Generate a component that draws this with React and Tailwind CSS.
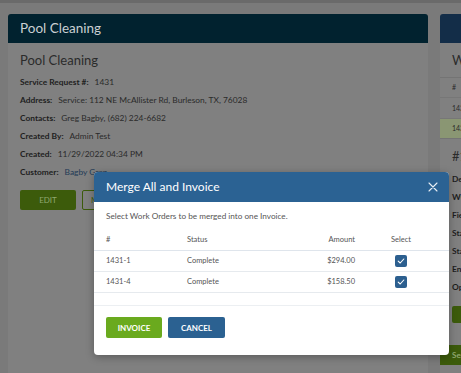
import React from "react";

// Background detail line: bold label + value
const InfoLine = ({ label, children }) => (
  <div className="flex gap-[6px] leading-[18px] text-[8.4px]">
    <span className="font-bold text-[#1e1e1e]">{label}</span>
    <span className="text-[#2a2a2a]">{children}</span>
  </div>
);

const Check = () => (
  <span className="inline-flex h-[12px] w-[12px] items-center justify-center rounded-[2px] bg-[#2c5f8f]">
    <svg width="8" height="8" viewBox="0 0 10 10" fill="none">
      <path d="M1.5 5.2 L4 7.5 L8.5 2.5" stroke="#fff" strokeWidth="1.4" strokeLinecap="round" strokeLinejoin="round" />
    </svg>
  </span>
);

const OrderRow = ({ id, status, amount }) => (
  <div className="flex h-[21px] items-center border-b border-[#e6eaee] pl-[12px] text-[7.5px] text-[#555]">
    <span className="w-[81px]">{id}</span>
    <span className="w-[113px]">{status}</span>
    <span className="w-[55px] text-right">{amount}</span>
    <span className="flex w-[92px] justify-center">
      <Check />
    </span>
  </div>
);

export default function App() {
  return (
    <div
      className="relative h-[373px] w-[461px] overflow-hidden border-t-[3px] border-[#6a6a6a] bg-[#7a7a7a]"
      style={{ fontFamily: "Lato, 'Open Sans', sans-serif" }}
    >
      {/* -------------------- page behind the overlay -------------------- */}
      <div className="flex gap-[12px] pl-[8px] pt-[11px]">
        {/* Left card */}
        <div className="flex h-[400px] w-[420px] shrink-0 flex-col">
          <div className="flex h-[29px] items-center rounded-t-[3px] bg-[#01222f] px-[12px] text-[13.5px] text-[#c9cfd2]">
            Pool Cleaning
          </div>
          <div className="flex-1 bg-[#808080] px-[12px] pt-[8px]">
            <div className="mb-[4px] text-[13px] leading-[18px] text-[#2b2b2b]">Pool Cleaning</div>
            <InfoLine label="Service Request #:">1431</InfoLine>
            <InfoLine label="Address:">Service: 112 NE McAllister Rd, Burleson, TX, 76028</InfoLine>
            <InfoLine label="Contacts:">Greg Bagby, (682) 224-6682</InfoLine>
            <InfoLine label="Created By:">Admin Test</InfoLine>
            <InfoLine label="Created:">11/29/2022 04:34 PM</InfoLine>
            <InfoLine label="Customer:">
              <span className="text-[#1f3a56]">Bagby Greg</span>
            </InfoLine>
            <div className="mt-[9px] flex gap-[6px]">
              <div className="flex h-[20px] w-[56px] items-center justify-center rounded-[2px] bg-[#3c5b0b] text-[8px] text-[#8fa870]">
                EDIT
              </div>
              <div className="flex h-[20px] items-center rounded-[2px] border border-[#3c5b0b] px-[8px] text-[8px] text-[#3c5b0b]">
                MERGE ALL AND INVOICE
              </div>
            </div>
          </div>
        </div>

        {/* Right card (cut off) */}
        <div className="flex h-[400px] w-[120px] shrink-0 flex-col">
          <div className="h-[29px] rounded-t-[3px] bg-[#132d48]" />
          <div className="flex-1 bg-[#808080]">
            <div className="px-[12px] pt-[8px] text-[13px] leading-[18px] text-[#2b2b2b]">Work Orders</div>
            <div className="mt-[8px] border-y border-[#747474]">
              <div className="flex h-[19px] items-center px-[12px] text-[7px] text-[#2a2a2a]">#</div>
              <div className="flex h-[21px] items-center border-t border-[#777] px-[12px] text-[7px] text-[#2a2a2a]">1431-1</div>
              <div className="flex h-[20px] items-center border-t border-[#777] bg-[#8a9673] px-[12px] text-[7px] text-[#2a2a2a]">1431-4</div>
            </div>
            <div className="px-[12px] pt-[8px] text-[13px] leading-[18px] text-[#2b2b2b]">#1431-4</div>
            <div className="px-[12px] pt-[5px]">
              <InfoLine label="Description:">Pool</InfoLine>
              <InfoLine label="WO Type:">Service</InfoLine>
              <InfoLine label="Field Tech:">Admin</InfoLine>
              <InfoLine label="Start:">11/29</InfoLine>
              <InfoLine label="Status:">Complete</InfoLine>
              <InfoLine label="End:">11/29</InfoLine>
              <InfoLine label="Options:">-</InfoLine>
              <div className="mt-[10px] h-[17px] w-[80px] rounded-[2px] bg-[#3c5b0b]" />
            </div>
            <div className="mt-[22px] flex h-[20px] items-center bg-[#3c5b0b] px-[12px] text-[8px] font-bold text-[#8fa870]">
              Send
            </div>
          </div>
        </div>
      </div>

      {/* -------------------- modal -------------------- */}
      <div className="absolute left-[94px] top-[169px] w-[355px] overflow-hidden rounded-[4px] bg-white shadow-[0_2px_8px_rgba(0,0,0,0.3)]">
        <div className="flex h-[30px] items-center justify-between bg-[#2b6293] pl-[12px] pr-[11px]">
          <span className="text-[12px] text-white">Merge All and Invoice</span>
          <svg width="10" height="10" viewBox="0 0 10 10">
            <path d="M1 1 L9 9 M9 1 L1 9" stroke="#e8eef4" strokeWidth="1.1" strokeLinecap="round" />
          </svg>
        </div>
        <div className="px-[12px] pt-[6px] text-[8.2px] leading-[16px] text-[#555]">
          Select Work Orders to be merged into one Invoice.
        </div>
        <div className="mt-[6px]">
          <div className="flex h-[21px] items-center border-b border-[#dfe5ec] pl-[12px] text-[7.5px] text-[#555]">
            <span className="w-[81px]">#</span>
            <span className="w-[113px]">Status</span>
            <span className="w-[55px] text-right">Amount</span>
            <span className="w-[92px] text-center">Select</span>
          </div>
          <OrderRow id="1431-1" status="Complete" amount="$294.00" />
          <OrderRow id="1431-4" status="Complete" amount="$158.50" />
        </div>
        <div className="mt-[12px] flex gap-[6px] border-t border-[#eceff2] px-[12px] pb-[17px] pt-[11px]">
          <button className="flex h-[21px] w-[56px] items-center justify-center rounded-[2px] bg-[#6aaa1e] text-[8px] font-bold text-white">
            INVOICE
          </button>
          <button className="flex h-[21px] w-[57px] items-center justify-center rounded-[2px] bg-[#2b6191] text-[8px] font-bold text-white">
            CANCEL
          </button>
        </div>
      </div>
    </div>
  );
}
